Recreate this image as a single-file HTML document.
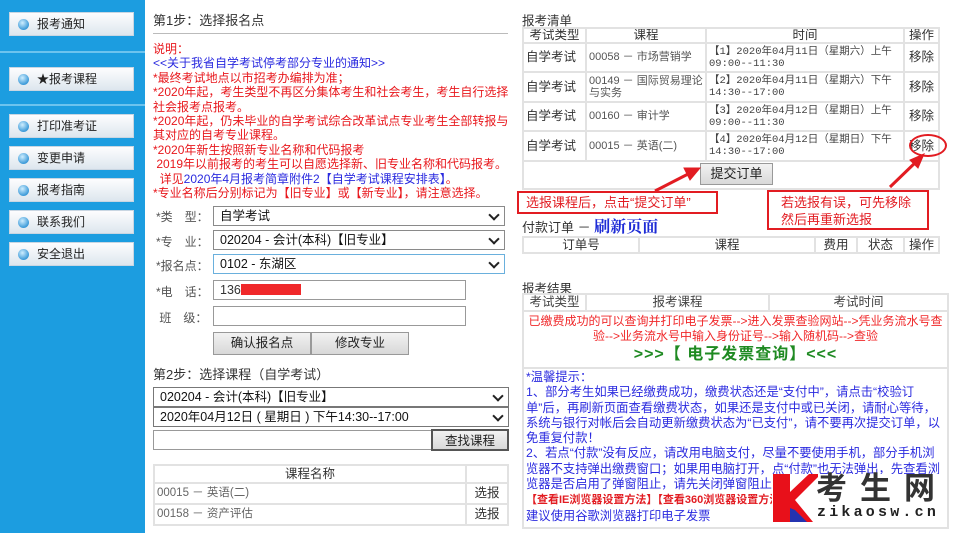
<!DOCTYPE html>
<html><head><meta charset="utf-8"><style>
*{margin:0;padding:0;box-sizing:border-box}
body{width:955px;height:533px;position:relative;background:#fff;font-family:"Liberation Sans","Noto Sans CJK SC",sans-serif;font-size:12px;color:#333;overflow:hidden}
.a{position:absolute;white-space:nowrap}
#side{position:absolute;left:0;top:0;width:145px;height:533px;background:#1c9de0}
.nb{position:absolute;left:9px;width:125px;height:24px;background:linear-gradient(#fdfdfe,#dde6ee);border:1px solid #c9d6e2;font-size:12px;color:#222;line-height:22px;padding-left:27px}
.nb:before{content:"";position:absolute;left:8px;top:6px;width:11px;height:11px;border-radius:50%;background:radial-gradient(circle at 40% 35%,#cfeeff,#3c9ad8 70%)}
.hr{position:absolute;left:0;width:145px;height:2px;background:#6cc3ee}
.red{color:#e8171c}.blue{color:#2a2adf}
.sel{position:absolute;height:20px;border:1px solid #8a8a8a;background:#fff;font-size:12.5px;line-height:18px;padding-left:6px;color:#111}
.sel:after{content:"";position:absolute;right:6px;top:4px;width:6px;height:6px;border-right:2px solid #222;border-bottom:2px solid #222;transform:rotate(45deg)}
.inp{position:absolute;height:20px;border:1px solid #999;background:#fff;font-size:12.5px;line-height:18px;padding-left:6px}
.btn{position:absolute;background:linear-gradient(#f2f2f2,#d8d8d8);border:1px solid #999;text-align:center;font-size:12.5px;color:#222}
table{position:absolute;border-collapse:collapse;font-size:12.5px;table-layout:fixed}
td{border:2px solid #e2e2e2;padding:0 2px;line-height:13px;overflow:hidden}
.m{font-family:'Liberation Mono','Noto Sans CJK SC',monospace;font-size:10.5px;line-height:12px;color:#444;white-space:nowrap}
</style></head><body>
<div id="side">
<div class="nb" style="top:12px">报考通知</div>
<div class="hr" style="top:51px"></div>
<div class="nb" style="top:67px">★报考课程</div>
<div class="hr" style="top:104px"></div>
<div class="nb" style="top:114px">打印准考证</div>
<div class="nb" style="top:146px">变更申请</div>
<div class="nb" style="top:178px">报考指南</div>
<div class="nb" style="top:210px">联系我们</div>
<div class="nb" style="top:242px">安全退出</div>
</div>
<div class="a" style="left:153px;top:10px;font-size:13px;color:#333">第1步：选择报名点</div>
<div class="a" style="left:153px;top:33px;width:355px;height:1px;background:#bbb"></div>
<div class="a" style="left:153px;top:42px;font-size:12px;line-height:14.4px;white-space:normal;width:360px">
<div class="red">说明：</div>
<div class="blue">&lt;&lt;关于我省自学考试停考部分专业的通知&gt;&gt;</div>
<div class="red">*最终考试地点以市招考办编排为准；</div>
<div class="red">*2020年起，考生类型不再区分集体考生和社会考生，考生自行选择社会报考点报考。</div>
<div class="red">*2020年起，仍未毕业的自学考试综合改革试点专业考生全部转报与其对应的自考专业课程。</div>
<div class="red">*2020年新生按照新专业名称和代码报考</div>
<div class="red">&nbsp;2019年以前报考的考生可以自愿选择新、旧专业名称和代码报考。</div>
<div class="red">&nbsp;&nbsp;详见<span class="blue">2020年4月报考简章附件2【自学考试课程安排表】</span>。</div>
<div class="red">*专业名称后分别标记为【旧专业】或【新专业】，请注意选择。</div>
</div>
<div class="a" style="left:156px;top:208px;color:#555">*类　型：</div>
<div class="sel" style="left:213px;top:206px;width:292px">自学考试</div>
<div class="a" style="left:156px;top:233px;color:#555">*专　业：</div>
<div class="sel" style="left:213px;top:230px;width:292px">020204 - 会计(本科)【旧专业】</div>
<div class="a" style="left:156px;top:257px;color:#555">*报名点：</div>
<div class="sel" style="left:213px;top:254px;width:292px;border-color:#6ab0dd">0102 - 东湖区</div>
<div class="a" style="left:156px;top:283px;color:#555">*电　话：</div>
<div class="inp" style="left:213px;top:280px;width:253px">136<span style="display:inline-block;width:60px;height:11px;background:#f0282a;vertical-align:-1px"></span></div>
<div class="a" style="left:156px;top:309px;color:#555">&nbsp;班　级：</div>
<div class="inp" style="left:213px;top:306px;width:253px"></div>
<div class="btn" style="left:213px;top:332px;width:98px;height:23px;line-height:21px">确认报名点</div>
<div class="btn" style="left:311px;top:332px;width:98px;height:23px;line-height:21px">修改专业</div>
<div class="a" style="left:153px;top:364px;font-size:13px">第2步：选择课程（自学考试）</div>
<div class="sel" style="left:153px;top:387px;width:356px;border-color:#777">020204 - 会计(本科)【旧专业】</div>
<div class="sel" style="left:153px;top:407px;width:356px;border-color:#777">2020年04月12日 ( 星期日 ) 下午14:30--17:00</div>
<div class="inp" style="left:153px;top:430px;width:280px"></div>
<div class="btn" style="left:431px;top:429px;width:78px;height:22px;line-height:20px;border:2px solid #555">查找课程</div>
<table style="left:153px;top:464px;width:356px">
<tr style="height:18px"><td style="text-align:center">课程名称</td><td style="width:42px"></td></tr>
<tr style="height:21px"><td style="color:#666;font-size:11.5px">00015 － 英语(二)</td><td style="text-align:center">选报</td></tr>
<tr style="height:21px"><td style="color:#666;font-size:11.5px">00158 － 资产评估</td><td style="text-align:center">选报</td></tr>
</table>

<div class="a" style="left:522px;top:10px;font-size:12.5px">报考清单</div>
<table style="left:522px;top:27px;width:418px;font-size:12.5px">
<tr style="height:15px;text-align:center"><td style="width:63px">考试类型</td><td style="width:120px">课程</td><td>时间</td><td style="width:35px">操作</td></tr>
<tr style="height:29px"><td>自学考试</td><td style="font-size:11px;color:#555">00058 － 市场营销学</td><td class="m">【1】2020年04月11日（星期六）上午<br>09:00--11:30</td><td style="text-align:center">移除</td></tr>
<tr style="height:30px"><td>自学考试</td><td style="font-size:11px;line-height:12px;color:#555">00149 － 国际贸易理论与实务</td><td class="m">【2】2020年04月11日（星期六）下午<br>14:30--17:00</td><td style="text-align:center">移除</td></tr>
<tr style="height:29px"><td>自学考试</td><td style="font-size:11px;color:#555">00160 － 审计学</td><td class="m">【3】2020年04月12日（星期日）上午<br>09:00--11:30</td><td style="text-align:center">移除</td></tr>
<tr style="height:30px"><td>自学考试</td><td style="font-size:11px;color:#555">00015 － 英语(二)</td><td class="m">【4】2020年04月12日（星期日）下午<br>14:30--17:00</td><td style="text-align:center">移除</td></tr>
<tr style="height:28px"><td colspan="4"></td></tr>
</table>
<div class="a" style="left:909px;top:134px;width:38px;height:23px;border:2px solid #e21c22;border-radius:50%"></div>
<div class="btn" style="left:700px;top:163px;width:73px;height:22px;line-height:20px;font-size:13px">提交订单</div>
<div class="a" style="left:517px;top:191px;width:201px;height:23px;border:2px solid #e21c22;color:#e21c22;font-size:13px;line-height:19px;padding-left:7px;background:#fff">选报课程后，点击“提交订单”</div>
<div class="a" style="left:767px;top:190px;width:162px;height:40px;border:2px solid #e21c22;color:#e21c22;font-size:13px;line-height:17px;padding:2px 0 0 12px;background:#fff;white-space:normal">若选报有误，可先移除<br>然后再重新选报</div>
<svg class="a" style="left:0;top:0" width="955" height="533"><g fill="#e21c22" stroke="#e21c22">
<line x1="655" y1="191" x2="692" y2="172" stroke-width="3"/><polygon points="700,168 684,168 690,180"/>
<line x1="890" y1="187" x2="918" y2="160" stroke-width="3"/><polygon points="924,154 910,160 918,168"/></g></svg>
<div class="a" style="left:522px;top:215px;font-size:13px;line-height:22px">付款订单 － <span style="font-family:'Noto Serif CJK SC',serif;font-weight:bold;color:#1d2bd6;font-size:16px">刷新页面</span></div>
<table style="left:522px;top:236px;width:418px;font-size:12.5px">
<tr style="height:16px;text-align:center"><td style="width:116px">订单号</td><td>课程</td><td style="width:42px">费用</td><td style="width:47px">状态</td><td style="width:35px">操作</td></tr>
</table>
<div class="a" style="left:522px;top:278px;font-size:12.5px">报考结果</div>
<table style="left:522px;top:293px;width:427px;font-size:12.5px">
<tr style="height:17px;text-align:center;color:#444"><td style="width:63px">考试类型</td><td style="width:183px">报考课程</td><td>考试时间</td></tr>
<tr style="height:57px"><td colspan="3" style="text-align:center;vertical-align:top;padding-top:2px"><div style="color:#f0282a;font-size:12px;line-height:15px">已缴费成功的可以查询并打印电子发票--&gt;进入发票查验网站--&gt;凭业务流水号查<br>验--&gt;业务流水号中输入身份证号--&gt;输入随机码--&gt;查验</div><div style="color:#1f8a22;font-weight:bold;font-size:16px;line-height:22px;letter-spacing:1px">&gt;&gt;&gt;【 电子发票查询】&lt;&lt;&lt;</div></td></tr>
<tr style="height:160px"><td colspan="3" style="vertical-align:top;color:#2a2adf;font-size:12.3px;line-height:15.3px;white-space:normal;padding-top:1px">*温馨提示：<br>1、部分考生如果已经缴费成功，缴费状态还是“支付中”，请点击“校验订单”后，再刷新页面查看缴费状态，如果还是支付中或已关闭，请耐心等待，系统与银行对帐后会自动更新缴费状态为“已支付”，请不要再次提交订单，以免重复付款！<br>2、若点“付款”没有反应，请改用电脑支付，尽量不要使用手机，部分手机浏览器不支持弹出缴费窗口；如果用电脑打开，点“付款”也无法弹出，先查看浏览器是否启用了弹窗阻止，请先关闭弹窗阻止再点<br><span style="color:#e21c22;font-size:11px;font-weight:bold">【查看IE浏览器设置方法】【查看360浏览器设置方法】</span><br>建议使用谷歌浏览器打印电子发票</td></tr>
</table>
<div class="a" style="left:772px;top:474px;width:175px;height:48px;background:#fff"></div>
<svg class="a" style="left:773px;top:474px" width="45" height="48"><polygon points="0,0 17,0 17,18 36,0 48,0 22,26 40,48 17,48 0,48" fill="#e8101a"/><polygon points="17,34 17,48 34,48 22,36" fill="#2433b0"/></svg>
<div class="a" style="left:816px;top:472px;font-size:31px;font-weight:bold;color:#333;letter-spacing:13px;line-height:34px">考生网</div>
<div class="a" style="left:817px;top:504px;font-family:'Liberation Mono',monospace;font-size:15px;font-weight:bold;color:#222;letter-spacing:3.2px;line-height:17px">zikaosw.cn</div>
</body></html>
